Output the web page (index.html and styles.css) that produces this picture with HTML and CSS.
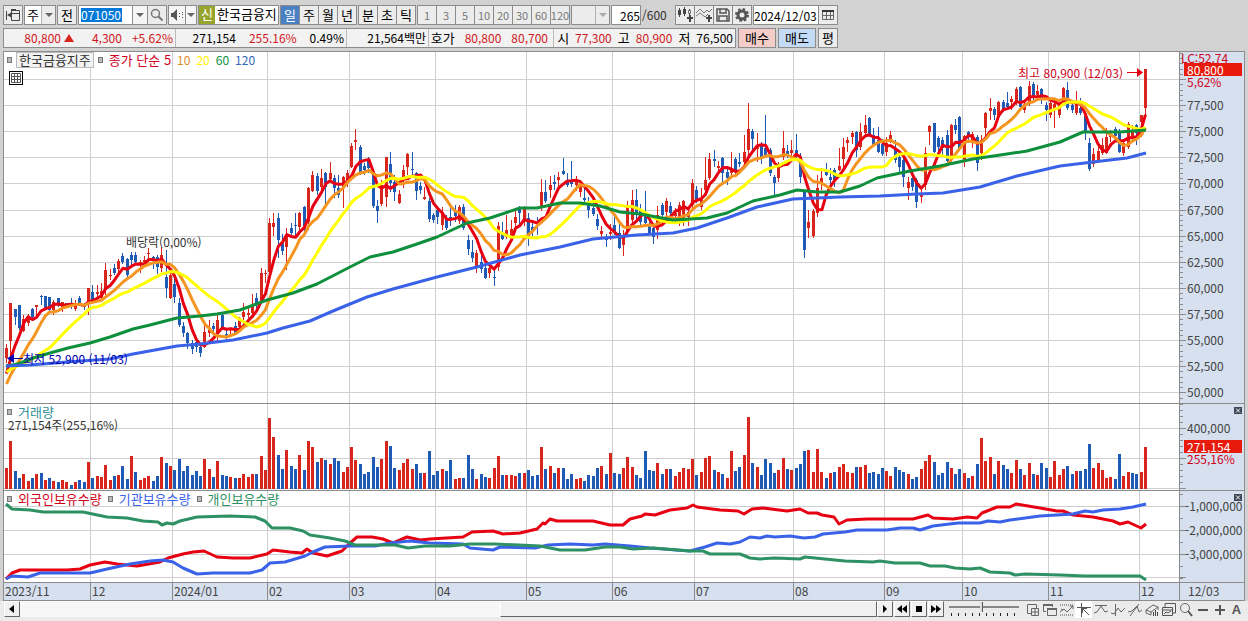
FILE: index.html
```
<!DOCTYPE html>
<html lang="ko">
<head>
    <meta charset="UTF-8">
    <meta name="viewport" content="width=device-width, initial-scale=1.0">
    <title>한국금융지주 - 종합차트</title>
    <link rel="stylesheet" href="styles.css">
</head>
<body>
    <form class="toolbar">
        <button type="button" class="tool" aria-label="패널 열기">
            <svg width="16" height="16" viewBox="0 0 16 16"><path d="M6.5 3.5h8v10h-8zM6.5 6.5h8M1.5 4v9" fill="none" stroke="#444"/><path d="M2 8l5-3v6zM6 2h5v2H6z" fill="#444"/></svg>
        </button>
        <label class="combo">
            <select class="combo-text" aria-label="종목구분"><option>주</option><option>선</option></select>
            <span class="arrow"></span>
        </label>
        <button type="button" class="tool">전</button>
        <div class="group">
            <label class="code-box"><input class="code" type="text" value="071050" aria-label="종목코드"></label>
            <button type="button" class="drop" aria-label="종목 목록"><span class="caret"></span></button>
            <button type="button" class="tool search" aria-label="검색">
                <svg width="14" height="14" viewBox="0 0 14 14"><circle cx="5.5" cy="5.5" r="4" fill="none" stroke="#777" stroke-width="1.5"/><path d="M8.5 8.5l4 4" stroke="#777" stroke-width="2"/></svg>
            </button>
        </div>
        <div class="group">
            <button type="button" class="drop sound" aria-label="소리">
                <svg width="14" height="14" viewBox="0 0 14 14"><path d="M1 5h2l4-4v12L3 9H1z" fill="#555"/><path d="M9 5h1v1H9zM9 8h1v1H9zM12 4h1v1h-1zM12 6h1v1h-1zM12 9h1v1h-1z" fill="#555"/></svg>
            </button>
            <button type="button" class="drop small" aria-label="소리 설정"><span class="caret"></span></button>
        </div>
        <div class="stock-name"><span class="badge">신</span><span class="name">한국금융지</span></div>
        <div class="group">
            <button type="button" class="tool active">일</button>
            <button type="button" class="tool">주</button>
            <button type="button" class="tool">월</button>
            <button type="button" class="tool">년</button>
        </div>
        <div class="group">
            <button type="button" class="tool">분</button>
            <button type="button" class="tool">초</button>
            <button type="button" class="tool">틱</button>
        </div>
        <div class="group">
            <button type="button" class="tool minute" disabled>1</button>
            <button type="button" class="tool minute" disabled>3</button>
            <button type="button" class="tool minute" disabled>5</button>
            <button type="button" class="tool minute" disabled>10</button>
            <button type="button" class="tool minute" disabled>20</button>
            <button type="button" class="tool minute" disabled>30</button>
            <button type="button" class="tool minute" disabled>60</button>
            <button type="button" class="tool minute" disabled>120</button>
        </div>
        <label class="combo wide">
            <select class="combo-text" aria-label="사용자 주기" disabled><option></option></select>
            <span class="arrow"></span>
        </label>
        <label class="count"><input class="count-input" type="text" value="265" aria-label="조회 개수">/600</label>
        <div class="group">
            <button type="button" class="tool" aria-label="차트 유형">
                <svg width="18" height="16" viewBox="0 0 18 16"><path d="M3.5 1v9M8.5 0v9M13.5 2v6" stroke="#444"/><path d="M2 3h3v5H2zM7 2h3v5H7zM11 10h2V8h2v2h2v2h-2v3h-2v-3h-2z" fill="#444"/><path d="M12.5 3.500h2v3h-2z" fill="#fff" stroke="#666"/></svg>
            </button>
            <button type="button" class="tool" aria-label="지표 추가">
                <svg width="18" height="16" viewBox="0 0 18 16"><path d="M1 6l4-4 4 4 3-3 2 2 3-3M1 9l4-3 5 4 3-3" fill="none" stroke="#777"/><path d="M11 10h2V8h2v2h2v2h-2v3h-2v-3h-2z" fill="#444"/></svg>
            </button>
            <button type="button" class="tool" aria-label="저장">
                <svg width="16" height="16" viewBox="0 0 16 16"><path d="M2 2h10l2 2v10H2zM5 2v4h6V2M4 14V9h8v5" fill="none" stroke="#555" stroke-width="1.5"/></svg>
            </button>
            <button type="button" class="tool" aria-label="설정">
                <svg width="16" height="16" viewBox="0 0 16 16"><circle cx="8" cy="8" r="4" fill="none" stroke="#555" stroke-width="3"/><circle cx="8" cy="8" r="6" fill="none" stroke="#555" stroke-width="2" stroke-dasharray="2.4 2.31"/></svg>
            </button>
        </div>
        <div class="group">
            <input class="date" type="text" value="2024/12/03" aria-label="조회일자">
            <button type="button" class="tool" aria-label="달력">
                <svg width="14" height="14" viewBox="0 0 14 14"><path d="M1.5 2.5h11v9h-11zM1.5 7.5h11M5.5 3v9M9.5 3v9" fill="none" stroke="#666"/><path d="M1 2h12v2H1z" fill="#333"/></svg>
            </button>
        </div>
    </form>

    <div class="quote">
        <div class="quote-box">
            <div class="cell cell-price"><span class="up">80,800</span><span class="triangle"></span><span class="up">4,300</span><span class="up">+5.62%</span></div>
            <div class="cell cell-volume"><span>271,154</span><span class="up">255.16%</span><span>0.49%</span></div>
            <div class="cell cell-amount"><span>21,564백만</span></div>
            <div class="cell cell-bid"><span class="ko">호가</span><span class="up">80,800</span><span class="up">80,700</span></div>
            <div class="cell cell-range"><span class="ko">시</span><span class="up">77,300</span><span class="ko">고</span><span class="up">80,900</span><span class="ko">저</span><span>76,500</span></div>
        </div>
        <button type="button" class="order buy">매수</button>
        <button type="button" class="order sell">매도</button>
        <button type="button" class="order average">평</button>
    </div>

    <main class="chart">
        <section class="panel panel-price">
            <div class="plot">
                <svg id="price-plot" class="drawing" viewBox="4 52 1175 351" preserveAspectRatio="none"></svg>
                <div class="legend">
                    <span class="box"></span><span class="title">한국금융지주</span><span class="box"></span>
                    <span class="ma5">종가 단순 5</span><span class="ma10">10</span><span class="ma20">20</span><span class="ma60">60</span><span class="ma120">120</span>
                </div>
                <button type="button" class="grid-button" aria-label="데이터 표">
                    <svg width="12" height="12" viewBox="0 0 12 12"><path d="M1.5 1.5h9v9h-9zM1.5 4.5h9M1.5 7.5h9M4.5 1v10M7.5 1v10" fill="none" stroke="#555"/></svg>
                </button>
                <span class="note note-high">최고 80,900 (12/03)
                    <svg width="16" height="10" viewBox="0 0 16 10"><path d="M0 4h10V0l6 4.5L10 9V5H0z" fill="#e60012"/></svg>
                </span>
                <span class="note note-ex">배당락(0,00%)</span>
                <span class="note note-low">
                    <svg width="16" height="10" viewBox="0 0 16 10"><path d="M16 4H7V0L0 4.5 7 9V5h9z" fill="#0000b0"/></svg>최저 52,900 (11/03)
                </span>
            </div>
            <div class="axis" id="price-axis">
                <span class="rate">LC:52.74</span>
                <span class="now now-price">80,800</span>
                <span class="rate rate-price">5,62%</span>
            </div>
        </section>
        <section class="panel panel-volume">
            <div class="plot">
                <svg id="volume-plot" class="drawing" viewBox="4 404 1175 86" preserveAspectRatio="none"></svg>
                <div class="legend"><span class="box"></span><span class="volume-name">거래량</span></div>
                <span class="note note-volume">271,154주(255,16%)</span>
            </div>
            <div class="axis" id="volume-axis">
                <button type="button" class="close" aria-label="닫기"><svg width="8" height="7" viewBox="0 0 8 7"><path d="M2 1.500l4 4M6 1.500l-4 4" stroke="#fff"/></svg></button>
                <span class="now now-volume">271,154</span>
                <span class="rate rate-volume">255,16%</span>
            </div>
        </section>
        <section class="panel panel-holding">
            <div class="plot">
                <svg id="holding-plot" class="drawing" viewBox="4 491 1175 91" preserveAspectRatio="none"></svg>
                <div class="legend">
                    <span class="box"></span><span class="foreign">외국인보유수량</span>
                    <span class="box"></span><span class="agency">기관보유수량</span>
                    <span class="box"></span><span class="personal">개인보유수량</span>
                </div>
            </div>
            <div class="axis" id="holding-axis">
                <button type="button" class="close" aria-label="닫기"><svg width="8" height="7" viewBox="0 0 8 7"><path d="M2 1.500l4 4M6 1.500l-4 4" stroke="#fff"/></svg></button>
            </div>
        </section>
        <section class="timeline">
            <div class="months" id="months"></div>
            <div class="last-date">12/03</div>
        </section>
    </main>

    <footer class="bottom">
        <div class="scroll">
            <button type="button" class="step" aria-label="이전"><svg width="6" height="8" viewBox="0 0 6 8"><path d="M5 0v8L0 4z"/></svg></button>
            <div class="track"><div class="thumb"></div></div>
        </div>
        <div class="player">
            <button type="button" class="step" aria-label="다음"><svg width="6" height="8" viewBox="0 0 6 8"><path d="M1 0v8l4-4z"/></svg></button>
            <button type="button" class="step" aria-label="뒤로"><svg width="10" height="8" viewBox="0 0 10 8"><path d="M5 0v8L0 4zM10 0v8L5 4z"/></svg></button>
            <button type="button" class="step" aria-label="정지"><svg width="6" height="8" viewBox="0 0 6 8"><path d="M0 1h6v6H0z"/></svg></button>
            <button type="button" class="step" aria-label="앞으로"><svg width="10" height="8" viewBox="0 0 10 8"><path d="M0 0v8l5-4zM5 0v8l5-4z"/></svg></button>
        </div>
        <div class="speed">
            <input type="range" class="slider" min="0" max="100" value="47" aria-label="속도">
            <div class="marks"></div>
        </div>
        <div class="draw-tools">
            <button type="button" class="draw" aria-label="차트 추가"><svg width="16" height="16" viewBox="0 0 16 16"><path d="M6 11.5H2.5v-9h9V6M6.5 6.5h7v7h-7zM6.5 10h7M10 6.5v7" fill="none" stroke="#666"/></svg></button>
            <button type="button" class="draw" aria-label="차트 겹치기"><svg width="16" height="16" viewBox="0 0 16 16"><path d="M4 9.5H1.5v-7h9V5M5.5 6.5h9v7h-9z" fill="none" stroke="#666"/><path d="M1 2h10v2H1zM5 6h10v2H5z" fill="#666"/></svg></button>
            <button type="button" class="draw" aria-label="추세선"><svg width="16" height="16" viewBox="0 0 16 16"><path d="M1 3h14M1 13h14" stroke="#555" stroke-dasharray="1 1"/><path d="M1 10l4-3 3 3 6-6M11 4h3v3M2 7l2 1" fill="none" stroke="#666"/></svg></button>
            <button type="button" class="draw pressed" aria-label="십자선"><svg width="16" height="16" viewBox="0 0 16 16"><path d="M5.5 1v14M1 5.5h14" stroke="#555"/><path d="M6 6l7 7M6.5 11V6.5H11" fill="none" stroke="#555"/></svg></button>
            <button type="button" class="draw" aria-label="수평선"><svg width="16" height="16" viewBox="0 0 16 16"><path d="M2 3.5h12M1 11l3-1 4-6 4 6 3-1" fill="none" stroke="#666"/></svg></button>
            <button type="button" class="draw" aria-label="수직선"><svg width="16" height="16" viewBox="0 0 16 16"><path d="M5.5 2v12M1 11l3 1 4-6 3 4 4-4" fill="none" stroke="#666"/></svg></button>
            <button type="button" class="draw" aria-label="사선"><svg width="16" height="16" viewBox="0 0 16 16"><path d="M3 14L12 2M1 10l4-1 5-5 2 6 3-2" fill="none" stroke="#666"/></svg></button>
            <button type="button" class="draw" aria-label="지우개"><svg width="16" height="16" viewBox="0 0 16 16"><path d="M2 8l7-5 5 2-7 5zM2 8v3l5 2v-3M14 5v3" fill="none" stroke="#666"/><path d="M9.5 10v4M11.5 8v6M13.5 10v4" stroke="#444"/></svg></button>
            <button type="button" class="draw" aria-label="이미지"><svg width="16" height="16" viewBox="0 0 16 16"><path d="M4 5V1.5h10.5V11H12M1.5 5.5h10v8h-10zM1.5 8h10M3 12l2-2 2 1 3-2" fill="none" stroke="#555"/></svg></button>
            <button type="button" class="draw" aria-label="돋보기"><svg width="16" height="16" viewBox="0 0 16 16"><circle cx="7" cy="6" r="4.5" fill="none" stroke="#666"/><path d="M10 9l4 5" stroke="#555" stroke-width="2"/></svg></button>
            <button type="button" class="draw" aria-label="축소"><svg width="16" height="16" viewBox="0 0 16 16"><path d="M3 8h10" stroke="#555" stroke-width="2"/></svg></button>
            <button type="button" class="draw" aria-label="확대"><svg width="16" height="16" viewBox="0 0 16 16"><path d="M3 8h10M8 3v10" stroke="#555" stroke-width="2"/></svg></button>
            <button type="button" class="draw letter">A</button>
        </div>
    </footer>

    <script src="chart.js"></script>
</body>
</html>
```

FILE: styles.css
```
* {
    box-sizing: border-box;
}

body {
    margin: 0;
    min-height: 100vh;
    display: flex;
    flex-direction: column;
    background-color: #d2d2d2;
    color: #000;
    font-family: "Noto Sans CJK KR", sans-serif;
    font-size: 12px;
    line-height: 16px;
}

button, input, select {
    font: inherit;
    color: inherit;
    margin: 0;
    padding: 0;
    border: 0;
    border-radius: 0;
}

button {
    display: flex;
    align-items: center;
    justify-content: center;
}

svg {
    display: block;
    flex: none;
}

/* Toolbar */
.toolbar {
    display: flex;
    gap: 1px;
    height: 26px;
    padding: 5px 3px 1px;
}

.group {
    display: flex;
    height: 20px;
}

.tool, .drop, .combo, .stock-name, .code-box, .date, .count-input {
    height: 20px;
    border: 1px solid #8c8c8c;
    background: #ececec;
}

.tool {
    width: 20px;
    font-size: 13px;
}

.minute {
    font-size: 11px;
}

.group > * + * {
    margin-left: -1px;
}

.tool.active {
    background: #4a80c4;
    color: #fff;
}

.tool:disabled {
    color: #777;
}

.combo {
    display: flex;
    width: 32px;
    font-size: 13px;
}

.combo-text {
    width: 16px;
    appearance: none;
    background: #fff;
    text-align: center;
}

.arrow {
    flex: 1;
    border-left: 1px solid #b0b0b0;
    display: flex;
    align-items: center;
    justify-content: center;
}

.arrow::after, .caret {
    content: "";
    border: 4px solid transparent;
    border-top: 4px solid #666;
    border-bottom: 0;
}

.combo.wide {
    width: 39px;
}

.combo.wide .combo-text {
    width: 23px;
    background: #ececec;
}

.combo.wide .arrow::after {
    border-top-color: #aaa;
}

.code-box {
    width: 55px;
    padding: 2px;
    background: #fff;
}

.code {
    display: block;
    width: 41px;
    height: 14px;
    background: #0078d7;
    color: #fff;
}

.drop {
    width: 16px;
    background: #f5f5f5;
}

.search {
    width: 20px;
}

.sound {
    width: 18px;
}

.small {
    width: 12px;
}

.stock-name {
    display: flex;
    width: 81px;
    background: #fff;
    font-size: 13px;
    white-space: nowrap;
}

.badge {
    width: 16px;
    height: 18px;
    background: #98a52c;
    color: #fff;
    text-align: center;
}

.name {
    padding-left: 2px;
}

.count {
    display: flex;
    align-items: center;
    width: 63px;
    color: #333;
}

.count-input {
    width: 30px;
    margin-right: 1px;
    background: #fff;
    color: #000;
    text-align: right;
}

.date {
    width: 66px;
    background: #fff;
}

/* Quote line */
.quote {
    display: flex;
    gap: 2px;
    height: 25px;
    padding: 2px 3px;
}

.quote-box {
    display: flex;
    width: 733px;
    height: 20px;
    border: 1px solid #8c8c8c;
    background: #f2f2f2;
}

.cell {
    display: flex;
    align-items: center;
    justify-content: flex-end;
    gap: 10px;
    padding-right: 2px;
    border-right: 1px solid #bbb;
    white-space: nowrap;
}

.cell-price {
    width: 172px;
}

.triangle {
    margin: 0 8px 0 -7px;
    border: 5px solid transparent;
    border-top: 0;
    border-bottom: 8px solid #d9261c;
}

.cell-volume {
    width: 171px;
    gap: 13px;
}

.cell-amount {
    width: 82px;
}

.cell-bid {
    width: 125px;
    padding-right: 5px;
}

.cell-range {
    flex: 1;
    gap: 6px;
    border-right: 0;
}

.ko, .order {
    font-size: 13px;
}

.up {
    color: #d0191c;
}

.order {
    width: 38px;
    height: 20px;
    border: 1px solid #8c8c8c;
}

.buy {
    background: #f5cdc8;
}

.sell {
    background: #c4dbf5;
}

.average {
    width: 20px;
    background: #ececec;
}

/* Chart */
.chart {
    flex: 1;
    display: flex;
    flex-direction: column;
    margin: 0 3px;
    border: 1px solid #8c8c8c;
    border-bottom: 0;
    background: #fff;
}

.panel {
    display: flex;
    border-bottom: 1px solid #8c8c8c;
}

.panel-price {
    flex: 1;
    min-height: 200px;
}

.panel-volume {
    height: 87px;
}

.panel-holding {
    height: 92px;
}

.plot {
    flex: 1;
    position: relative;
}

.axis {
    position: relative;
    width: 65px;
    border-left: 1px solid #8c8c8c;
    background: #d6e0ee;
    color: #444;
}

.drawing, .ticks {
    position: absolute;
    top: 0;
    left: 0;
    width: 100%;
    height: 100%;
    overflow: hidden;
}

.legend {
    position: absolute;
    top: 0;
    left: 3px;
    display: flex;
    align-items: center;
    gap: 6px;
    height: 16px;
    font-size: 13px;
    white-space: nowrap;
}

.box {
    width: 5px;
    height: 6px;
    border: 1px solid #777;
    background: #bbb;
}

.title {
    margin: 0 -2px;
    padding: 0 2px;
    line-height: 14px;
    border: 1px solid #bbb;
    background: #f2f2f2;
    color: #333;
}

.ma5 {
    color: #d0021b;
}

.ma10, .ma20, .ma60, .ma120 {
    font-size: 12px;
}

.ma10 {
    color: #d8901f;
}

.ma20 {
    color: #fff200;
}

.ma60 {
    color: #0e8f3c;
}

.ma120 {
    color: #3565b8;
}

.volume-name {
    color: #2f8f9a;
}

.foreign {
    color: #d0021b;
}

.agency {
    color: #3a62e8;
}

.personal {
    color: #2e9163;
}

.grid-button {
    position: absolute;
    top: 19px;
    left: 5px;
    width: 14px;
    height: 14px;
    border: 1px solid #000;
    background: #fff;
}

.note {
    position: absolute;
    display: flex;
    align-items: center;
    gap: 4px;
    color: #333;
    white-space: nowrap;
}

.note-high {
    top: 13px;
    right: 36px;
    color: #d0021b;
}

.note-ex {
    top: 182px;
    left: 122px;
}

.note-low {
    top: 299px;
    left: 3px;
    gap: 0;
    color: #0000b0;
}

.note-volume {
    top: 13px;
    left: 4px;
}

.label {
    position: absolute;
    left: 7px;
    line-height: 12px;
    transform: translateY(-50%);
}

.label.wide {
    left: 5px;
}

.now {
    position: absolute;
    left: 4px;
    right: 2px;
    padding-left: 3px;
    line-height: 13px;
    background: #e81a0c;
    color: #fff;
}

.now-price {
    top: 11px;
}

.now-volume {
    top: 36px;
}

.rate {
    position: absolute;
    top: 0;
    left: 1px;
    line-height: 12px;
    color: #d0021b;
}

.rate-price {
    top: 24px;
    left: 7px;
}

.rate-volume {
    top: 49px;
    left: 7px;
}

.close {
    position: absolute;
    top: 3px;
    right: 2px;
    width: 8px;
    height: 7px;
    background: #3c4654;
}

.timeline {
    display: flex;
    height: 18px;
    border-bottom: 1px solid #8c8c8c;
    background: #d6e0ee;
    color: #444;
}

.months {
    flex: 1;
    position: relative;
}

.month {
    position: absolute;
    top: 0;
    height: 17px;
    padding-left: 1px;
    border-left: 1px solid #8c8c8c;
}

.month:first-child {
    border-left: 0;
}

.last-date {
    width: 65px;
    padding-left: 8px;
    border-left: 1px solid #8c8c8c;
}

/* Bottom bar */
.bottom {
    display: flex;
    height: 20px;
    padding: 0 3px 3px 4px;
    background: #ebebeb;
}

.scroll {
    flex: 1;
    display: flex;
}

.step {
    width: 16px;
    height: 16px;
    border: 1px solid #fff;
    border-right-color: #666;
    border-bottom-color: #666;
    background: #f0f0f0;
}

.track {
    flex: 1;
    height: 16px;
    background: #f7f7f7;
}

.thumb {
    width: 44%;
    height: 16px;
    margin-left: auto;
    border: 1px solid #fff;
    border-right-color: #666;
    border-bottom-color: #666;
    background: #f0f0f0;
}

.player {
    display: flex;
    gap: 1px;
}

.speed {
    width: 70px;
    margin: 0 5px;
}

.slider {
    display: block;
    width: 70px;
    height: 12px;
    appearance: none;
    background: linear-gradient(#888, #888) center / 100% 2px no-repeat;
}

.slider::-webkit-slider-thumb {
    appearance: none;
    width: 3px;
    height: 10px;
    border-right: 1px solid #555;
    background: #ddd;
}

.marks {
    height: 3px;
    margin: 0 2px;
    background: repeating-linear-gradient(90deg, #222 0 1px, transparent 1px 7px);
}

.draw-tools {
    display: flex;
}

.draw {
    width: 17px;
    height: 17px;
    background: transparent;
}

.pressed {
    background: #fff;
}

.letter {
    color: #555;
    font-family: "Liberation Sans", sans-serif;
    font-size: 13px;
    font-weight: bold;
}
```

FILE: chart.js
```
const SVG = 'http://www.w3.org/2000/svg';
const UP = '#d9261c';
const DOWN = '#1f5bb5';

// colour, high, body top, body bottom, low
const candles = `
r 344 348 358 363|r 303 303 341 362|b 309 309 317 325|b 305 305 328 330|r 315 319 331 332|r 314 317 323 326|b 308 309 317 319|r 305 305 307 317|b 295 296 297 305|b 296 296 308 310
b 297 297 310 312|r 300 302 310 315|b 298 298 303 307|r 302 302 308 312|b 303 303 307 308|b 298 303 307 309|r 300 303 309 311|b 296 298 304 306|b 303 304 307 310|r 288 288 303 315
b 285 292 301 302|r 285 292 294 298|r 283 291 298 300|r 263 270 290 295|r 269 275 276 280|b 264 268 273 275|r 259 261 269 272|b 253 256 262 264|b 258 259 275 278|b 252 255 260 265
b 252 255 262 264|r 260 262 263 273|r 256 260 262 265|r 248 253 254 262|b 256 257 261 269|b 255 257 267 274|r 247 255 268 272|b 250 277 288 298|r 272 275 298 299|b 276 284 297 303
b 298 303 325 327|b 322 326 333 337|b 332 333 343 349|b 340 343 349 354|b 339 342 347 352|b 343 347 353 357|r 323 332 347 348|r 320 330 333 337|b 323 326 329 333|r 315 320 334 341
b 313 315 329 330|b 330 334 338 341|r 327 328 330 336|b 322 326 333 335|r 317 318 327 330|r 303 312 317 325|r 307 313 315 318|r 294 306 313 318|b 293 298 305 310|r 268 273 300 303
r 270 273 274 283|r 218 223 272 282|r 213 223 227 236|b 213 218 240 258|b 234 243 251 255|r 228 236 247 270|b 223 228 233 237|b 213 225 226 238|r 212 213 227 235|b 206 207 230 231
r 187 188 222 230|r 171 175 191 192|b 173 176 191 195|r 169 178 187 192|b 172 173 187 205|r 162 173 179 182|b 175 178 188 198|b 175 188 195 198|r 176 177 187 208|r 170 173 183 187
r 143 146 167 168|r 129 140 142 150|b 145 147 173 175|b 163 166 170 175|b 157 161 168 173|b 170 173 206 208|b 200 206 211 223|r 180 185 204 206|r 157 157 197 207|b 152 164 183 192
b 175 182 192 201|r 190 194 203 204|r 165 170 178 188|r 153 154 167 175|b 152 169 170 176|b 172 173 191 200|b 182 186 190 194|r 187 197 199 200|b 198 201 219 222|b 213 215 220 223
b 206 210 217 224|r 207 212 225 230|b 215 218 228 230|b 206 217 220 226|b 205 210 216 222|r 205 207 221 224|b 204 207 228 230|b 235 240 249 255|b 240 252 258 262|r 250 253 267 273
b 253 262 269 273|b 264 268 278 279|r 265 268 273 278|b 270 277 278 286|r 222 226 267 271|b 222 233 239 240|r 215 230 237 239|r 220 229 236 238|r 210 217 223 230|b 206 207 213 225
r 206 209 219 226|b 213 218 237 246|b 223 227 232 236|b 217 222 224 235|r 179 192 207 211|b 180 192 201 203|r 176 185 190 198|b 175 182 184 190|r 172 177 180 188|b 158 171 174 175
b 173 180 185 187|b 161 180 184 187|r 176 181 185 191|r 180 184 192 197|b 188 198 200 202|b 197 202 210 218|b 197 208 214 216|b 214 219 226 230|r 226 231 234 239|b 234 238 240 247
r 224 232 234 240|b 213 225 232 235|b 222 233 248 249|r 230 236 245 256|r 201 207 232 235|r 190 200 220 223|b 189 200 215 222|b 204 210 222 225|b 191 213 223 225|b 222 226 234 235
b 225 228 237 244|r 206 215 230 239|b 203 205 215 220|r 198 201 212 216|b 202 206 213 217|r 208 213 216 222|r 202 205 220 226|r 200 201 220 226|r 208 212 217 226|r 179 183 205 210
b 186 190 200 203|r 188 198 207 210|r 157 180 190 195|r 153 159 178 180|b 150 159 161 167|r 161 166 168 172|b 157 158 173 183|b 167 172 178 185|r 152 168 173 175|b 157 159 172 177
b 153 162 164 167|r 135 152 162 165|r 103 129 150 156|b 129 131 139 150|r 133 145 149 162|b 142 145 159 164|b 115 148 155 158|b 148 150 173 176|b 175 177 183 196|r 162 165 178 182
r 131 148 157 160|b 145 151 154 158|r 140 150 153 156|b 134 150 155 160|b 153 163 177 183|b 190 192 250 258|r 210 222 228 238|r 209 211 236 238|r 175 188 213 217|r 168 178 183 190
b 163 171 175 176|b 168 177 180 190|b 168 170 180 187|r 148 166 170 171|r 138 147 159 168|r 137 140 143 152|r 131 133 137 144|b 131 132 150 157|r 123 132 147 150|r 115 125 133 135
b 117 118 134 137|b 128 135 145 147|b 127 140 152 153|b 139 144 154 156|r 137 143 152 156|r 131 135 140 143|b 140 149 160 163|b 153 157 167 173|b 158 160 177 187|r 177 182 188 200
b 172 178 187 191|b 178 180 202 208|r 188 193 197 203|r 147 153 185 190|r 125 126 132 145|b 123 123 152 153|b 136 138 147 153|b 137 140 148 156|b 130 135 161 165|r 124 125 158 162
b 119 125 130 134|b 116 117 148 150|r 135 136 160 167|b 131 132 137 143|r 132 134 142 148|b 135 137 163 171|r 135 140 153 160|r 112 113 128 137|r 98 108 111 120|b 107 109 115 120
r 101 102 116 120|b 100 102 111 112|b 92 103 107 110|r 96 99 102 110|r 87 89 103 105|b 86 87 107 111|r 100 104 110 113|r 81 86 102 106|b 82 84 97 100|r 85 91 95 99
b 88 89 100 104|b 102 105 110 121|r 102 103 115 118|r 102 104 110 128|r 103 104 115 118|r 87 88 101 104|b 82 90 108 110|b 100 105 110 113|r 91 104 113 115|b 98 108 113 115
b 113 116 132 140|b 138 143 169 171|r 148 154 164 167|r 147 151 162 163|r 138 145 153 155|r 128 137 153 154|r 130 135 137 142|b 127 129 136 141|b 129 132 152 153|r 140 143 153 156
r 122 124 147 149|r 125 132 136 140|b 124 125 133 145|r 115 115 122 137|r 69 69 108 118
`.trim().split(/[|\n]/).map(function (row) {
    const p = row.split(' ');
    return { color: p[0] === 'r' ? UP : DOWN, high: +p[1], top: +p[2], bottom: +p[3], low: +p[4] };
});

// bar heights, negative when volume fell on a down day
const volumes = [
    21, 48, -18, -11, 15, 8, -11, 15, -16, 9, -11, 8, -7, 9, 7, -4, 7, -9, -7, 27,
    -11, 13, 12, 24, 9, -13, 14, -23, -10, 33, -17, 9, 11, 13, -8, -13, 32, -26, 23, -19,
    -30, -18, -23, -14, -18, -13, 30, 20, -12, 28, -14, -13, 12, -11, 11, 15, 12, 15, -15, 33,
    19, 71, 52, -34, -20, 39, -23, -20, 34, -19, 48, 42, -27, 31, -29, 25, -31, -28, 17, 22,
    42, 29, -25, -15, -17, -32, -22, 30, 48, -43, -21, 19, 26, 30, 20, -25, -16, 16, -38, -14,
    -18, 20, -18, -29, 10, 11, -11, -34, -20, 10, -15, -12, 11, 21, 33, -14, 14, 14, 13, -16,
    16, -19, -13, -14, 42, -20, 23, -16, 21, -21, -10, -15, 10, 11, -8, -14, -13, -21, 23, -15,
    36, -16, -15, 21, 32, 22, -14, -11, -38, -19, -18, 26, -15, 20, -20, 13, 17, 21, 20, 30,
    -14, 17, 31, 33, -19, 17, -15, 11, 38, -18, -22, 34, 72, -26, 22, -14, -30, -26, -16, 19,
    31, -20, 19, -21, -25, -38, 39, 17, 40, 17, -11, 16, -17, 22, 25, 17, 16, -22, 22, 24,
    -16, -17, -15, -21, 18, 13, -22, -19, -17, 15, -10, -12, 20, 28, 34, -27, -14, -16, -27, 21,
    -15, -20, 16, -11, 13, -25, 51, 28, 32, -15, 28, -24, -20, 16, 29, -20, 14, 26, -15, 14,
    -26, -21, 12, 28, 14, 20, -23, -15, 18, -18, -20, -45, 21, 26, 19, 11, 12, -10, -35, 13,
    17, -16, -15, 17, 42
];

const ma60 = '6,366 18,364 33,358 50,353 68,348 90,343 110,337 133,329 150,325 177,318 200,316 217,314 240,310 267,300 293,293 317,284 350,267 370,257 393,252 417,244 437,237 467,223 490,218 520,208 537,208 560,203 580,203 600,206 620,212 640,214 673,220 707,218 727,213 753,201 780,195 797,190 817,192 840,192 860,186 877,178 910,171 940,166 973,159 1007,154 1027,151 1060,142 1083,132 1120,132 1146,130';
const ma120 = '6,366 30,365 67,362 110,359 133,354 177,346 200,344 233,340 267,333 283,328 310,321 333,311 367,297 393,289 437,277 477,267 520,255 560,247 593,239 637,235 673,233 697,228 727,218 757,207 793,199 840,197 880,196 917,194 943,193 980,187 1017,176 1060,166 1093,162 1127,158 1146,153';

const foreign = '6,579 12,573 20,570 67,570 80,569 90,565 105,562 117,564 137,566 160,562 168,558 183,554 193,552 204,551 217,557 233,558 250,558 267,554 273,550 290,552 302,553 307,549 313,553 327,556 342,551 350,543 357,537 372,537 383,539 393,543 407,537 420,540 430,539 463,537 472,532 493,531 503,534 520,533 537,529 543,523 545,524 550,519 557,521 593,521 610,525 623,525 630,519 642,516 645,514 655,515 670,510 687,508 693,505 697,507 720,510 738,511 744,514 752,509 763,508 787,511 800,509 808,513 817,513 822,515 834,517 839,524 847,520 867,519 913,519 928,515 933,518 953,519 967,517 977,518 982,513 997,507 1010,507 1016,504 1040,508 1057,511 1063,511 1073,515 1093,517 1113,521 1120,524 1128,522 1141,528 1146,524';
const agency = '6,579 12,576 28,577 40,573 90,573 107,569 130,564 150,561 163,560 173,562 183,568 197,574 213,573 250,573 262,570 270,563 285,562 305,556 313,552 325,547 350,546 375,546 390,543 410,541 430,543 463,544 470,548 493,550 500,547 535,548 548,545 570,544 593,545 605,544 630,546 650,548 690,551 705,547 717,543 730,544 740,542 750,537 760,538 767,536 775,537 790,536 804,538 815,537 823,534 845,532 857,530 887,530 900,528 913,528 920,530 933,526 958,523 980,523 988,521 1000,522 1010,520 1040,516 1073,514 1085,511 1093,512 1103,510 1120,509 1133,507 1146,504';
const personal = '6,504 12,509 30,510 43,512 83,512 107,517 127,518 143,521 158,522 162,525 167,523 173,524 180,521 197,517 230,516 255,517 265,521 272,528 290,528 303,531 310,535 330,538 345,541 355,545 395,545 408,548 425,546 450,546 470,544 495,544 540,546 560,550 585,550 605,547 620,547 633,549 653,548 690,551 703,551 710,554 740,554 750,558 760,559 775,558 800,559 805,557 835,560 845,561 873,562 880,561 895,563 920,563 930,566 945,566 955,568 970,569 980,568 990,572 1010,573 1015,575 1025,574 1060,575 1085,576 1140,576 1146,580';

const months = [
    ['2023/11', 4], ['12', 90], ['2024/01', 172], ['02', 267], ['03', 349], ['04', 435], ['05', 526],
    ['06', 612], ['07', 694], ['08', 793], ['09', 884], ['10', 962], ['11', 1048], ['12', 1139]
];

function barX(i) {
    return 6.5 + i * 1139 / 264;
}

function add(parent, name, attrs) {
    const el = document.createElementNS(SVG, name);
    for (const key in attrs) {
        el.setAttribute(key, attrs[key]);
    }
    parent.appendChild(el);
}

function rect(svg, x, y, width, height, fill) {
    add(svg, 'rect', { x: x, y: y, width: width, height: height, fill: fill, 'shape-rendering': 'crispEdges' });
}

function line(svg, points, color) {
    add(svg, 'polyline', { points: points, fill: 'none', stroke: color, 'stroke-width': 3, 'stroke-linejoin': 'round', 'vector-effect': 'non-scaling-stroke' });
}

function grid(svg, rows) {
    const box = svg.viewBox.baseVal;
    months.slice(1).forEach(function (m) {
        rect(svg, m[1], box.y, 1, box.height, '#cfcfcf');
    });
    rows.forEach(function (y) {
        rect(svg, box.x, y, box.width, 1, '#cfcfcf');
    });
}

function average(period, color) {
    // closes before the first visible bar
    const before = Array(11).fill(360).concat(Array(5).fill(394), Array(4).fill(380));
    const closes = before.concat(candles.map(function (c) {
        return c.color === UP ? c.top : c.bottom;
    }));
    const points = candles.map(function (c, i) {
        const part = closes.slice(i + 21 - period, i + 21);
        const sum = part.reduce(function (a, b) { return a + b; }, 0);
        return barX(i).toFixed(1) + ',' + (sum / period).toFixed(1);
    });
    line(document.getElementById('price-plot'), points.join(' '), color);
}

function axis(id, top, height, start, step, labels) {
    const el = document.getElementById(id);
    const svg = document.createElementNS(SVG, 'svg');
    svg.setAttribute('class', 'ticks');
    svg.setAttribute('viewBox', '0 ' + top + ' 64 ' + height);
    svg.setAttribute('preserveAspectRatio', 'none');
    for (let y = start; y < top + height; y += step) {
        rect(svg, 0, Math.round(y), 3, 1, '#8c8c8c');
    }
    labels.forEach(function (item) {
        rect(svg, 0, item[1], 6, 1, '#8c8c8c');
        if (!item[0]) return;
        const label = document.createElement('span');
        label.className = item[0][0] === '-' ? 'label wide' : 'label';
        label.style.top = ((item[1] - top) / height * 100) + '%';
        label.textContent = item[0];
        el.prepend(label);
    });
    el.prepend(svg);
}

const priceRows = [];
for (let i = 0; i <= 12; i++) {
    priceRows.push([i === 0 ? '' : (80000 - i * 2500).toLocaleString('en-US'), Math.round(79 + i * 26.1)]);
}

const pricePlot = document.getElementById('price-plot');
grid(pricePlot, priceRows.map(function (r) { return r[1]; }));
candles.forEach(function (c, i) {
    const x = Math.round(barX(i) - 1.5);
    rect(pricePlot, x + 1, c.high, 1, c.low - c.high, c.color);
    rect(pricePlot, x, c.top, 3, c.bottom - c.top, c.color);
});
average(5, '#e60012');
average(10, '#f5951f');
average(20, '#ffff00');
line(pricePlot, ma60, '#0e8f3c');
line(pricePlot, ma120, '#3a62e8');

const volumePlot = document.getElementById('volume-plot');
grid(volumePlot, [428, 458, 488]);
volumes.forEach(function (v, i) {
    rect(volumePlot, Math.round(barX(i) - 1.5), 489 - Math.abs(v), 3, Math.abs(v), v > 0 ? UP : DOWN);
});

const holdingPlot = document.getElementById('holding-plot');
grid(holdingPlot, [506, 530, 554, 577]);
line(holdingPlot, foreign, '#e60012');
line(holdingPlot, agency, '#3a62e8');
line(holdingPlot, personal, '#2e9163');

axis('price-axis', 52, 351, 53, 5.22, priceRows);
axis('volume-axis', 404, 86, 404, 6, [['400,000', 428], ['', 458], ['', 488]]);
axis('holding-axis', 491, 91, 494, 12, [['-1,000,000', 506], ['-2,000,000', 530], ['-3,000,000', 554], ['', 577]]);

months.forEach(function (m) {
    const el = document.createElement('span');
    el.className = 'month';
    el.style.left = ((m[1] - 4) / 1175 * 100) + '%';
    el.textContent = m[0];
    document.getElementById('months').appendChild(el);
});
```
